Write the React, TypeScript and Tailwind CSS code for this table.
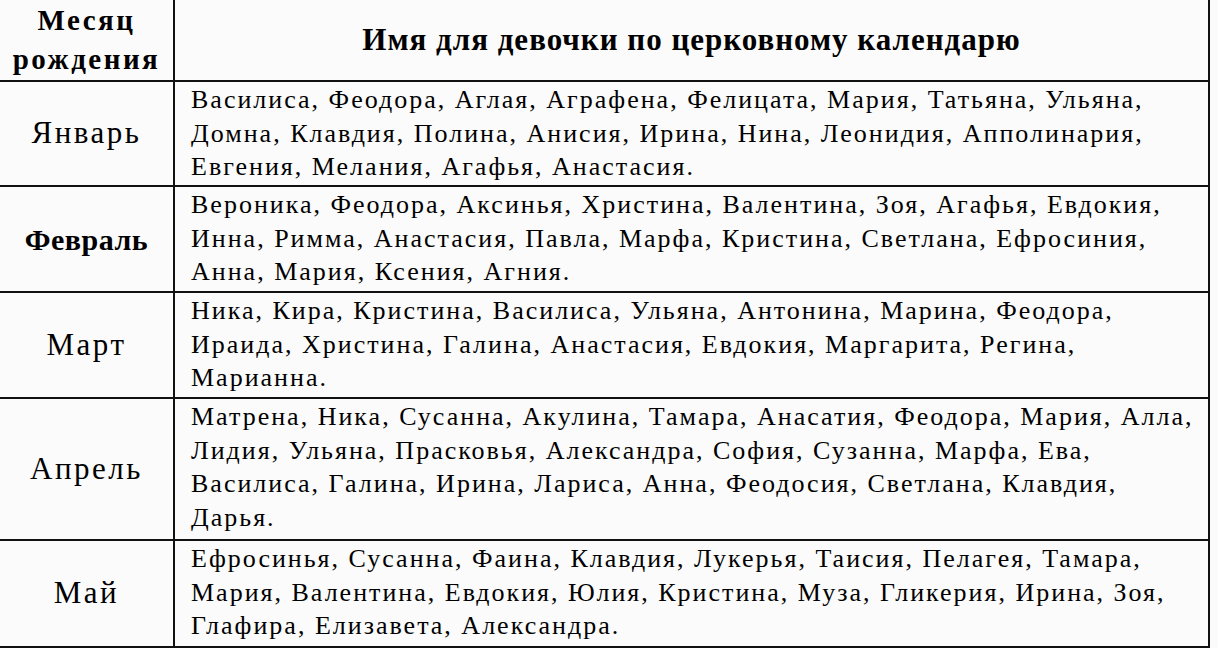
import React from 'react';

interface MonthRow {
  month: string;
  bold?: boolean;
  height: string;
  lines: string[];
}

const rows: MonthRow[] = [
  {
    month: 'Январь',
    height: 'h-[105px]',
    lines: [
      'Василиса, Феодора, Аглая, Аграфена, Фелицата, Мария, Татьяна, Ульяна,',
      'Домна, Клавдия, Полина, Анисия, Ирина, Нина, Леонидия, Апполинария,',
      'Евгения, Мелания, Агафья, Анастасия.',
    ],
  },
  {
    month: 'Февраль',
    bold: true,
    height: 'h-[106px]',
    lines: [
      'Вероника, Феодора, Аксинья, Христина, Валентина, Зоя, Агафья, Евдокия,',
      'Инна, Римма, Анастасия, Павла, Марфа, Кристина, Светлана, Ефросиния,',
      'Анна, Мария, Ксения, Агния.',
    ],
  },
  {
    month: 'Март',
    height: 'h-[106px]',
    lines: [
      'Ника, Кира, Кристина, Василиса, Ульяна, Антонина, Марина, Феодора,',
      'Ираида, Христина, Галина, Анастасия, Евдокия, Маргарита, Регина,',
      'Марианна.',
    ],
  },
  {
    month: 'Апрель',
    height: 'h-[142px]',
    lines: [
      'Матрена, Ника, Сусанна, Акулина, Тамара, Анасатия, Феодора, Мария, Алла,',
      'Лидия, Ульяна, Прасковья, Александра, София, Сузанна, Марфа, Ева,',
      'Василиса, Галина, Ирина, Лариса, Анна, Феодосия, Светлана, Клавдия,',
      'Дарья.',
    ],
  },
  {
    month: 'Май',
    height: 'h-[105px]',
    lines: [
      'Ефросинья, Сусанна, Фаина, Клавдия, Лукерья, Таисия, Пелагея, Тамара,',
      'Мария, Валентина, Евдокия, Юлия, Кристина, Муза, Гликерия, Ирина, Зоя,',
      'Глафира, Елизавета, Александра.',
    ],
  },
];

export default function App() {
  return (
    <div className="w-[1218px] h-[648px] bg-[#fbfbfb] text-black [font-family:'Liberation_Serif','Times_New_Roman',serif] overflow-hidden">
      <div className="w-[1210px] flex flex-col border-r-2 border-b-2 border-[#111]">
        {/* header */}
        <div className="flex h-[82px] border-b-2 border-[#111]">
          <div className="w-[175px] shrink-0 border-r-2 border-[#111] flex flex-col items-center justify-center text-[29px] font-bold leading-[39px] tracking-[2.5px]">
            <span>Месяц</span>
            <span>рождения</span>
          </div>
          <div className="flex-1 flex items-center justify-center text-[31px] font-bold tracking-[1px]">
            Имя для девочки по церковному календарю
          </div>
        </div>

        {rows.map((row, i) => (
          <div
            key={row.month}
            className={`flex ${row.height} ${i < rows.length - 1 ? 'border-b-2 border-[#111]' : ''}`}
          >
            <div
              className={`w-[175px] shrink-0 border-r-2 border-[#111] flex items-center justify-center ${
                row.bold ? 'text-[30px] font-bold tracking-[0.5px]' : 'text-[31px] tracking-[2.5px]'
              }`}
            >
              {row.month}
            </div>
            <div className="flex-1 pl-[16px] pt-px text-[26px] leading-[33.5px] tracking-[2px]">
              {row.lines.map((line) => (
                <div key={line} className="whitespace-nowrap">
                  {line}
                </div>
              ))}
            </div>
          </div>
        ))}
      </div>
    </div>
  );
}
